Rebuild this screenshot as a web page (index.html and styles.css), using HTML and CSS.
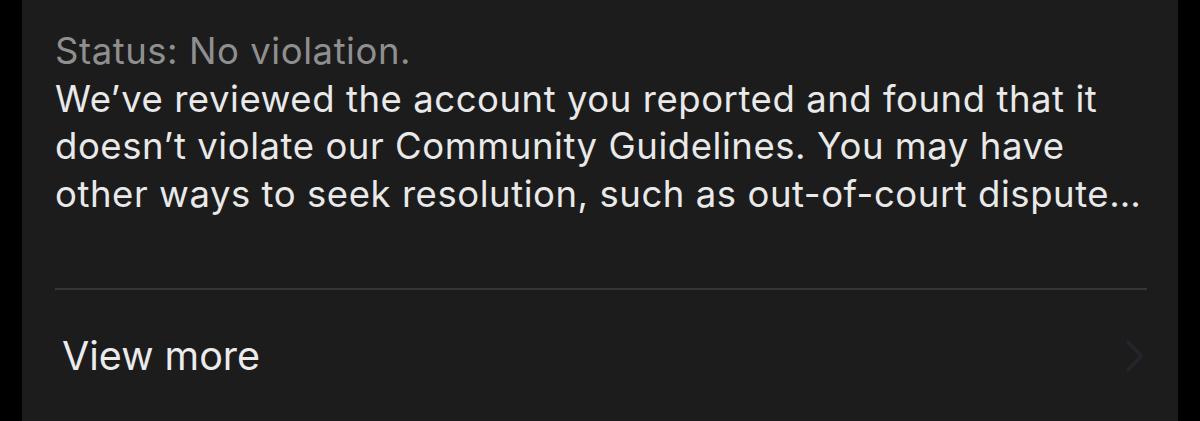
FILE: index.html
```html
<!DOCTYPE html>
<html>
<head>
<meta charset="utf-8">
<link rel="stylesheet" href="styles.css">
</head>
<body>
<div class="card">
  <div class="body">
    <p class="status">Status: No violation.</p>
    <p class="message">We’ve reviewed the account you reported and found that it<br>doesn’t violate our Community Guidelines. You may have<br>other ways to seek resolution, such as out-of-court dispute…</p>
  </div>
  <div class="divider"></div>
  <div class="row">
    <span class="row-label">View more</span>
    <svg class="chev" width="20" height="34" viewBox="0 0 20 34"><path d="M3 3 L16 17 L3 31" fill="none" stroke="#23252b" stroke-width="4" stroke-linecap="round" stroke-linejoin="round"/></svg>
  </div>
</div>
</body>
</html>
```
FILE: styles.css
```css
html, body {
  margin: 0;
  padding: 0;
  background: #000;
  height: 421px;
  overflow: hidden;
}
.card {
  margin-left: 22px;
  width: 1156px;
  height: 421px;
  background: #1c1c1c;
  font-family: Inter, "Noto Sans", sans-serif;
  -webkit-font-smoothing: antialiased;
}
.body {
  padding: 28px 30px 0 33px;
}
.status, .message {
  margin: 0;
  font-size: 36.5px;
  line-height: 47.5px;
  letter-spacing: 0.55px;
}
.status {
  color: #8f8f8f;
}
.message {
  color: #e9e9e9;
}
.divider {
  height: 2px;
  background: #363636;
  margin: 70px 31px 0 33px;
}
.row {
  display: flex;
  align-items: center;
  justify-content: space-between;
  padding: 41px 33px 0 40px;
}
.row-label {
  color: #ebebeb;
  font-size: 39.5px;
  line-height: 50px;
}
.chev {
  display: block;
}
```
